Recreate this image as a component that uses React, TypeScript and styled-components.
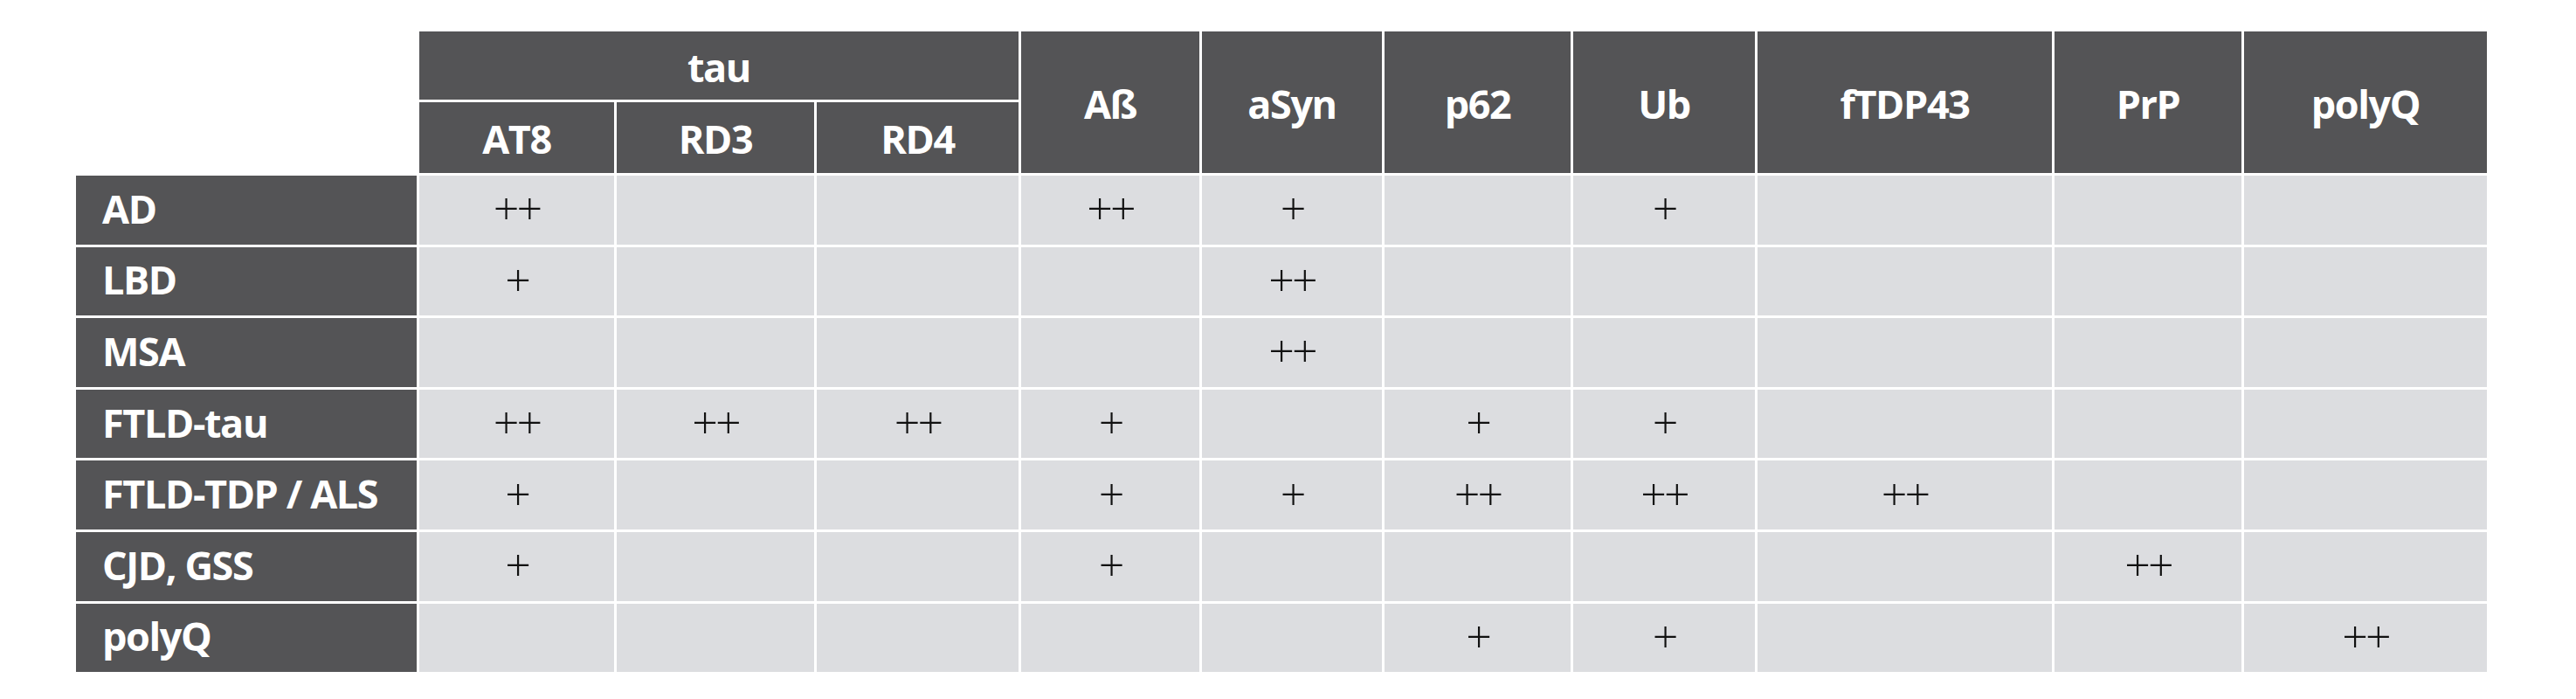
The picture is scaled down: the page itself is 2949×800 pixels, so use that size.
import React from "react";
import styled, { createGlobalStyle } from "styled-components";

const Global = createGlobalStyle`
  html, body {
    margin: 0;
    padding: 0;
    background: #ffffff;
  }
  body {
    font-family: "Open Sans", "Noto Sans", "Liberation Sans", sans-serif;
  }
`;

const Page = styled.div`
  padding: 36px 0 0 87px;
  height: 800px;
  box-sizing: border-box;
  background: #ffffff;
`;

const Table = styled.div`
  display: grid;
  grid-template-columns: 390px 223px 226px 231px 204px 206px 213px 208px 337px 214px 278px;
  grid-template-rows: 78px 81px repeat(7, 78.6px);
  column-gap: 3px;
  row-gap: 3px;
  width: max-content;
`;

const HeadCell = styled.div<{ $col: string; $row: string }>`
  grid-column: ${(p) => p.$col};
  grid-row: ${(p) => p.$row};
  background: #545456;
  color: #ffffff;
  display: flex;
  align-items: center;
  justify-content: center;
  font-family: "Open Sans", "Noto Sans", sans-serif;
  font-weight: 700;
  font-stretch: 88%;
  font-size: 45px;
  letter-spacing: -1.4px;
  line-height: 1;
  padding-top: 2px;
  box-sizing: border-box;
`;

const Corner = styled.div`
  grid-column: 1;
  grid-row: 1 / 3;
  background: #ffffff;
`;

const RowLabel = styled.div`
  grid-column: 1;
  background: #545456;
  color: #ffffff;
  display: flex;
  align-items: center;
  padding-left: 30px;
  padding-bottom: 4px;
  box-sizing: border-box;
  font-family: "Open Sans", "Noto Sans", sans-serif;
  font-weight: 700;
  font-stretch: 88%;
  font-size: 45px;
  letter-spacing: -1.4px;
  line-height: 1;
  white-space: nowrap;
`;

const DataCell = styled.div`
  background: #dcdde0;
  color: #111111;
  display: flex;
  align-items: center;
  justify-content: center;
  font-family: "Open Sans", "Liberation Sans", sans-serif;
  font-weight: 300;
  font-size: 52px;
  line-height: 1;
  letter-spacing: -3px;
  padding-bottom: 6px;
  box-sizing: border-box;
`;

const columns = ["AT8", "RD3", "RD4", "Aß", "aSyn", "p62", "Ub", "fTDP43", "PrP", "polyQ"];

const rows: { label: string; values: Record<string, string> }[] = [
  { label: "AD", values: { AT8: "++", "Aß": "++", aSyn: "+", Ub: "+" } },
  { label: "LBD", values: { AT8: "+", aSyn: "++" } },
  { label: "MSA", values: { aSyn: "++" } },
  {
    label: "FTLD-tau",
    values: { AT8: "++", RD3: "++", RD4: "++", "Aß": "+", p62: "+", Ub: "+" },
  },
  {
    label: "FTLD-TDP / ALS",
    values: { AT8: "+", "Aß": "+", aSyn: "+", p62: "++", Ub: "++", fTDP43: "++" },
  },
  { label: "CJD, GSS", values: { AT8: "+", "Aß": "+", PrP: "++" } },
  { label: "polyQ", values: { p62: "+", Ub: "+", polyQ: "++" } },
];

export default function App() {
  return (
    <>
      <Global />
      <Page>
        <Table>
          <Corner />
          <HeadCell $col="2 / 5" $row="1">tau</HeadCell>
          <HeadCell $col="2" $row="2">AT8</HeadCell>
          <HeadCell $col="3" $row="2">RD3</HeadCell>
          <HeadCell $col="4" $row="2">RD4</HeadCell>
          {columns.slice(3).map((c, i) => (
            <HeadCell key={c} $col={String(i + 5)} $row="1 / 3">
              {c}
            </HeadCell>
          ))}
          {rows.map((r) => (
            <React.Fragment key={r.label}>
              <RowLabel>{r.label}</RowLabel>
              {columns.map((c) => (
                <DataCell key={c}>{r.values[c] ?? ""}</DataCell>
              ))}
            </React.Fragment>
          ))}
        </Table>
      </Page>
    </>
  );
}
